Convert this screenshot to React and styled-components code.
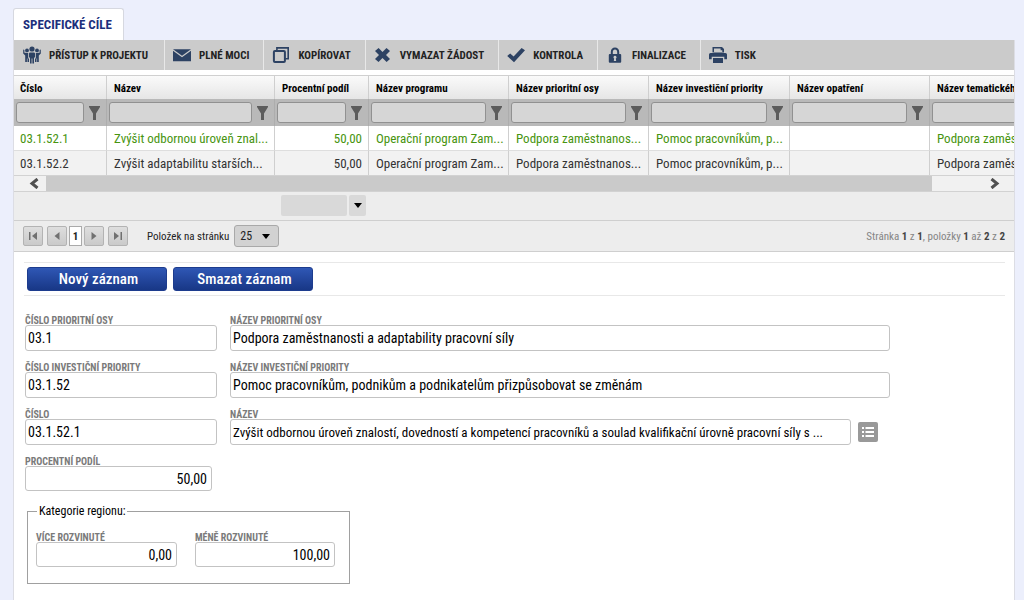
import React, { useState } from "react";
import styled, { createGlobalStyle, css } from "styled-components";

const GlobalStyle = createGlobalStyle`
  * {
    box-sizing: border-box;
  }

  body {
    margin: 0;
    background: #eceffc;
    color: #222;
    font-family: "Roboto Condensed", "Liberation Sans Narrow", Roboto, sans-serif;
    font-size: 13px;
  }

  button,
  input,
  select {
    font-family: inherit;
    margin: 0;
  }
`;

const Page = styled.div`
  display: flex;
  flex-direction: column;
  min-height: 100vh;
  padding: 8px 9px 0 13px;
`;

const Tabs = styled.nav`
  display: flex;
`;

const Tab = styled.a`
  height: 32px;
  padding: 0 11px 0 9px;
  border: 1px solid #d6d8e0;
  border-bottom: 0;
  border-radius: 3px 3px 0 0;
  background: #fff;
  color: #1c2f7c;
  font-size: 13px;
  font-weight: 700;
  line-height: 31px;
  text-decoration: none;
  white-space: nowrap;
`;

const Panel = styled.main`
  flex: 1;
  border: solid #dcdde4;
  border-width: 0 1px;
  background: #fff;
`;

const Toolbar = styled.div`
  display: flex;
  height: 30px;
  margin-bottom: 5px;
  padding-left: 1px;
  background: #cbcbcb;
`;

const ToolButton = styled.button`
  display: flex;
  align-items: center;
  gap: 8px;
  padding: 0 14px 0 8px;
  border: 0;
  border-right: 1px solid #e8e8e8;
  background: none;
  color: #222;
  font-size: 11px;
  font-weight: 700;
  white-space: nowrap;

  &:first-child {
    padding-right: 16px;
  }

  &:last-child {
    border-right: 0;
  }

  svg {
    flex: none;
    width: 18px;
    height: 18px;
    fill: #2d4263;
  }
`;

const GridScroller = styled.div`
  overflow: hidden;
  border-top: 1px solid #d0d0d0;
`;

const Grid = styled.table`
  width: 1056px;
  border-collapse: separate;
  border-spacing: 0;
  table-layout: fixed;
`;

const cellBorder = css`
  border-right: 1px solid #cfcfcf;
`;

const HeadCell = styled.th`
  ${cellBorder}
  height: 23px;
  padding: 1px 0 0 7px;
  background: linear-gradient(#fafafa, #e6e6e6);
  color: #000;
  font-size: 11px;
  font-weight: 700;
  text-align: left;
  white-space: nowrap;

  &:first-child {
    padding-left: 6px;
  }
`;

const FilterCell = styled.td`
  ${cellBorder}
  border-right-color: #adadad;
  height: 27px;
  padding: 0 6px 0 2px;
  background: #b9b9b9;
`;

const Filter = styled.div`
  display: flex;
  align-items: center;
  gap: 5px;
`;

const FilterInput = styled.input`
  flex: 1;
  min-width: 0;
  height: 21px;
  border: 1px solid #919191;
  border-radius: 3px;
  background: #d6d6d6;
  font-size: 11px;
`;

const FilterButton = styled.button`
  display: flex;
  padding: 0;
  border: 0;
  background: none;

  svg {
    width: 11px;
    height: 14px;
    fill: #5c5c5c;
  }
`;

const Row = styled.tr`
  color: ${props => (props.$selected ? "#47940f" : "#333")};
  background: ${props => (props.$selected ? "#fff" : "#f2f2f2")};
`;

const Cell = styled.td`
  ${cellBorder}
  height: ${props => (props.$last ? 24 : 25)}px;
  padding: 0 6px 0 7px;
  border-bottom: ${props => (props.$last ? 0 : 1)}px solid #dedede;
  overflow: hidden;
  font-size: 13px;
  text-align: ${props => (props.$numeric ? "right" : "left")};
  white-space: nowrap;

  &:first-child {
    padding-left: 6px;
  }
`;

const ScrollBar = styled.div`
  display: grid;
  grid-template-columns: 32px 1fr 82px;
  height: 17px;
  border: solid #d2d2d2;
  border-width: 1px 0;
  background: #f1f1f1;
`;

const ScrollThumb = styled.div`
  background: #cacaca;
`;

const ScrollButton = styled.button`
  display: flex;
  align-items: center;
  justify-content: flex-end;
  padding: 0 ${props => props.$inset}px 0 0;
  border: 0;
  background: none;

  svg {
    width: 10px;
    height: 11px;
    fill: none;
    stroke: #505050;
    stroke-width: 3;
  }
`;

const Summary = styled.div`
  display: flex;
  gap: 2px;
  height: 28px;
  padding: 3px 0 0 267px;
  background: #ededed;
`;

const SummaryBox = styled.input`
  width: 66px;
  height: 21px;
  border: 0;
  border-radius: 2px;
  background: #d9d9d9;
`;

const SummaryButton = styled.button`
  display: flex;
  align-items: center;
  justify-content: center;
  width: 17px;
  height: 21px;
  padding: 0;
  border: 0;
  border-radius: 2px;
  background: #d9d9d9;

  svg {
    width: 8px;
    height: 5px;
  }
`;

const Pager = styled.div`
  display: flex;
  align-items: center;
  height: 32px;
  padding: 0 9px;
  border: solid #cfcfcf;
  border-width: 1px 0;
  background: #ededed;
  font-size: 11px;
`;

const PagerButtons = styled.div`
  display: flex;
  align-items: center;
  gap: 4px;
`;

const PageGroup = styled.div`
  display: flex;
  align-items: center;
  gap: 2px;
`;

const PageButton = styled.button`
  display: flex;
  align-items: center;
  justify-content: center;
  width: 20px;
  height: 20px;
  padding: 0;
  border: 1px solid #b3b3b3;
  border-radius: 2px;
  background: linear-gradient(#dedede, #cacaca);

  svg {
    width: 10px;
    height: 8px;
    fill: #707070;
  }
`;

const CurrentPage = styled.a`
  width: 13px;
  height: 20px;
  border: 1px solid #aaa;
  background: #fff;
  color: #222;
  font-size: 11px;
  font-weight: 700;
  line-height: 19px;
  text-align: center;
  text-decoration: none;
`;

const SizeLabel = styled.label`
  margin-left: 19px;
  color: #222;
  white-space: nowrap;
`;

const SizePicker = styled.div`
  display: grid;
  align-items: center;
  margin-left: 5px;

  select,
  svg {
    grid-area: 1 / 1;
  }

  svg {
    justify-self: end;
    width: 8px;
    height: 5px;
    margin-right: 9px;
    pointer-events: none;
  }
`;

const SizeSelect = styled.select`
  width: 45px;
  height: 22px;
  padding: 0 5px;
  border: 1px solid #a9a9a9;
  border-radius: 3px;
  background: #d2d2d2;
  color: #222;
  font-size: 12px;
  appearance: none;
`;

const PageInfo = styled.span`
  margin-left: auto;
  color: #858585;
  white-space: nowrap;

  strong {
    color: #444;
  }
`;

const Detail = styled.form`
  padding: 10px 9px 16px 10px;
`;

const Actions = styled.div`
  display: flex;
  gap: 6px;
  height: 34px;
  padding: 4px 3px 0;
  border: solid #e8e8e8;
  border-width: 1px 0;
`;

const ActionButton = styled.button`
  width: 140px;
  height: 24px;
  padding: 0 0 0 3px;
  border: 1px solid #1d3c8e;
  border-radius: 3px;
  background: linear-gradient(#2f57b5, #183786);
  color: #fff;
  font-size: 15px;
  font-weight: 500;
  white-space: nowrap;
`;

const Fields = styled.div`
  display: grid;
  grid-template-columns: 192px minmax(0, 1fr);
  column-gap: 13px;
  row-gap: 10px;
  padding: 18px 115px 0 1px;
`;

const Field = styled.div`
  display: flex;
  flex-direction: column;
`;

const Label = styled.label`
  height: 11px;
  color: #7a7a7a;
  font-size: 10px;
  font-weight: 700;
  line-height: 13px;
  white-space: nowrap;
`;

const TextInput = styled.input`
  width: ${props => props.$width || "100%"};
  min-width: 0;
  height: ${props => (props.$numeric ? 25 : 26)}px;
  padding: 0 ${props => (props.$numeric ? 4 : 2)}px;
  border: 1px solid #c3c3c3;
  border-radius: 3px;
  background: #fff;
  color: #000;
  font-size: ${props => (props.$long ? 13 : 14)}px;
  text-align: ${props => (props.$numeric ? "right" : "left")};
`;

const LookupRow = styled.div`
  display: flex;
  align-items: center;
  gap: 7px;
  padding-right: 12px;
`;

const LookupButton = styled.button`
  display: flex;
  flex: none;
  align-items: center;
  justify-content: center;
  width: 20px;
  height: 20px;
  padding: 0;
  border: 0;
  border-radius: 2px;
  background: #999;

  svg {
    width: 12px;
    height: 12px;
    fill: #fff;
  }
`;

const Region = styled.fieldset`
  display: grid;
  grid-template-columns: 141px 140px;
  align-items: start;
  gap: 18px;
  width: 323px;
  height: 81px;
  margin: 12px 0 0 3px;
  padding: 12px 8px 0;
  border: 1px solid #a0a0a0;

  legend {
    margin-left: 1px;
    padding: 0 2px;
    color: #000;
    font-size: 12px;
    line-height: 16px;
  }
`;

const icons = {
  people: (
    <svg viewBox="0 0 18 18">
      <circle cx="9" cy="3" r="2.6" />
      <circle cx="4" cy="4.4" r="1.9" />
      <circle cx="14" cy="4.4" r="1.9" />
      <path d="M7.2 6.400h3.600q1.200 0 1.200 1.200v4h-1V17.500H9.400v-5h-.8v5H7v-5.900H6V7.600Q6 6.400 7.200 6.400z" />
      <path d="M.2 3.600l1.200.4v2.800l3.800.2v5.400h.8V16H4.500v-3.400h-.6V16H2.200V9.600L.2 7.600z" />
      <path d="M17.800 3.600l-1.200.4v2.800l-3.800.2v5.400H12V16h1.500v-3.400h.6V16h1.700V9.600l2-2z" />
    </svg>
  ),
  mail: (
    <svg viewBox="0 0 18 18">
      <path d="M0 3.200h18L9 9.800z" />
      <path d="M0 4.800l9 6.500 9-6.500v10.400H0z" />
    </svg>
  ),
  copy: (
    <svg viewBox="0 0 18 18">
      <path d="M4.900 4.500V1.900h11.300v10.800h-2.900" fill="none" stroke="#2d4263" strokeWidth="1.600" />
      <rect x="1.900" y="5" width="11" height="11" rx="1" fill="none" stroke="#2d4263" strokeWidth="2" />
    </svg>
  ),
  cross: (
    <svg viewBox="0 0 18 18">
      <path d="M4.600 2L8.500 6l4-4L16 5l-4 4 4 4-3.400 3-4.100-4-4 4L1 13l4-4-4-4z" />
    </svg>
  ),
  check: (
    <svg viewBox="0 0 18 18">
      <path d="M.2 10l3-2.600 3.400 3.200L14.600 2 18 4.200 7 16.200z" />
    </svg>
  ),
  lock: (
    <svg viewBox="0 0 18 18">
      <path
        fillRule="evenodd"
        d="M4.800 8V6C4.800 3.400 6.600 1.600 9 1.600S13.200 3.400 13.200 6v2h1q1 0 1 1v6.800q0 1-1 1H3.800q-1 0-1-1V9q0-1 1-1zM6.800 8h4.400V6c0-1.500-.9-2.500-2.200-2.500S6.800 4.500 6.800 6zM9 9.800a1.500 1.500 0 0 0-.8 2.800L7.800 15h2.400l-.4-2.400A1.500 1.500 0 0 0 9 9.800z"
      />
    </svg>
  ),
  print: (
    <svg viewBox="0 0 18 18">
      <path fillRule="evenodd" d="M3.500 1h9.500l2 2v3.500h-11.500zM5 2.500V6h8.300V4.200h-1.700V2.500z" />
      <path d="M1.500 7h15Q18 7 18 8.500v4.800h-2.700v-2.600H2.700v2.600H0V8.500Q0 7 1.500 7z" />
      <path d="M4 12h10v5H4z" />
    </svg>
  )
};

const tools = [
  { icon: "people", label: "PŘÍSTUP K PROJEKTU" },
  { icon: "mail", label: "PLNÉ MOCI" },
  { icon: "copy", label: "KOPÍROVAT" },
  { icon: "cross", label: "VYMAZAT ŽÁDOST" },
  { icon: "check", label: "KONTROLA" },
  { icon: "lock", label: "FINALIZACE" },
  { icon: "print", label: "TISK" }
];

const columns = [
  { title: "Číslo", width: 93 },
  { title: "Název", width: 168 },
  { title: "Procentní podíl", width: 94, numeric: true },
  { title: "Název programu", width: 140 },
  { title: "Název prioritní osy", width: 140 },
  { title: "Název investiční priority", width: 141 },
  { title: "Název opatření", width: 140 },
  { title: "Název tematického cíle", width: 140 }
];

const rows = [
  [
    "03.1.52.1",
    "Zvýšit odbornou úroveň znal...",
    "50,00",
    "Operační program Zam...",
    "Podpora zaměstnanos...",
    "Pomoc pracovníkům, p...",
    "",
    "Podpora zaměstnanos..."
  ],
  [
    "03.1.52.2",
    "Zvýšit adaptabilitu starších...",
    "50,00",
    "Operační program Zam...",
    "Podpora zaměstnanos...",
    "Pomoc pracovníkům, p...",
    "",
    "Podpora zaměstnanos..."
  ]
];

const ArrowDown = () => (
  <svg viewBox="0 0 8 5">
    <path d="M0 0h8L4 5z" />
  </svg>
);

const TextField = ({ id, label, value, width, numeric }) => (
  <Field>
    <Label htmlFor={id}>{label}</Label>
    <TextInput id={id} defaultValue={value} $width={width} $numeric={numeric} />
  </Field>
);

const GoalsGrid = () => {
  const [selected, setSelected] = useState(0);

  return (
    <GridScroller>
      <Grid>
        <colgroup>
          {columns.map(column => (
            <col key={column.title} style={{ width: column.width }} />
          ))}
        </colgroup>
        <thead>
          <tr>
            {columns.map(column => (
              <HeadCell key={column.title}>{column.title}</HeadCell>
            ))}
          </tr>
          <tr>
            {columns.map(column => (
              <FilterCell key={column.title}>
                <Filter>
                  <FilterInput aria-label={column.title} />
                  <FilterButton type="button" aria-label={`Filtr ${column.title}`}>
                    <svg viewBox="0 0 11 14">
                      <path d="M0 0h11v1L7 7.500V14H4V7.500L0 1z" />
                    </svg>
                  </FilterButton>
                </Filter>
              </FilterCell>
            ))}
          </tr>
        </thead>
        <tbody>
          {rows.map((row, r) => (
            <Row key={row[0]} $selected={r === selected} onClick={() => setSelected(r)}>
              {row.map((text, c) => (
                <Cell
                  key={columns[c].title}
                  $numeric={columns[c].numeric}
                  $last={r === rows.length - 1}
                >
                  {text}
                </Cell>
              ))}
            </Row>
          ))}
        </tbody>
      </Grid>
    </GridScroller>
  );
};

const GridPager = () => (
  <Pager>
    <PagerButtons>
      <PageButton type="button" aria-label="První">
        <svg viewBox="0 0 10 8">
          <path d="M1 0h1.500v8H1zM9 0v8L4 4z" />
        </svg>
      </PageButton>
      <PageGroup>
        <PageButton type="button" aria-label="Předchozí">
          <svg viewBox="0 0 10 8">
            <path d="M7.500 0v8l-5-4z" />
          </svg>
        </PageButton>
        <CurrentPage href="#1">1</CurrentPage>
        <PageButton type="button" aria-label="Další">
          <svg viewBox="0 0 10 8">
            <path d="M2.500 0v8l5-4z" />
          </svg>
        </PageButton>
      </PageGroup>
      <PageButton type="button" aria-label="Poslední">
        <svg viewBox="0 0 10 8">
          <path d="M7.500 0H9v8H7.500zM1 0v8l5-4z" />
        </svg>
      </PageButton>
    </PagerButtons>
    <SizeLabel htmlFor="page-size">Položek na stránku</SizeLabel>
    <SizePicker>
      <SizeSelect id="page-size" defaultValue="25">
        <option>25</option>
        <option>50</option>
      </SizeSelect>
      <ArrowDown />
    </SizePicker>
    <PageInfo>
      Stránka <strong>1</strong> z <strong>1</strong>, položky <strong>1</strong> až{" "}
      <strong>2</strong> z <strong>2</strong>
    </PageInfo>
  </Pager>
);

const App = () => (
  <>
    <GlobalStyle />
    <Page>
      <Tabs>
        <Tab href="#cile">SPECIFICKÉ CÍLE</Tab>
      </Tabs>
      <Panel>
        <Toolbar>
          {tools.map(tool => (
            <ToolButton key={tool.label} type="button">
              {icons[tool.icon]}
              {tool.label}
            </ToolButton>
          ))}
        </Toolbar>
        <GoalsGrid />
        <ScrollBar>
          <ScrollButton type="button" aria-label="Doleva" $inset={7}>
            <svg viewBox="0 0 10 11">
              <path d="M8.500 1L3 5.500 8.500 10" />
            </svg>
          </ScrollButton>
          <ScrollThumb />
          <ScrollButton type="button" aria-label="Doprava" $inset={14}>
            <svg viewBox="0 0 10 11">
              <path d="M1.500 1L7 5.500 1.500 10" />
            </svg>
          </ScrollButton>
        </ScrollBar>
        <Summary>
          <SummaryBox aria-label="Souhrn" />
          <SummaryButton type="button" aria-label="Funkce souhrnu">
            <ArrowDown />
          </SummaryButton>
        </Summary>
        <GridPager />
        <Detail>
          <Actions>
            <ActionButton type="button">Nový záznam</ActionButton>
            <ActionButton type="button">Smazat záznam</ActionButton>
          </Actions>
          <Fields>
            <TextField id="axis-no" label="ČÍSLO PRIORITNÍ OSY" value="03.1" />
            <TextField
              id="axis-name"
              label="NÁZEV PRIORITNÍ OSY"
              value="Podpora zaměstnanosti a adaptability pracovní síly"
            />
            <TextField id="priority-no" label="ČÍSLO INVESTIČNÍ PRIORITY" value="03.1.52" />
            <TextField
              id="priority-name"
              label="NÁZEV INVESTIČNÍ PRIORITY"
              value="Pomoc pracovníkům, podnikům a podnikatelům přizpůsobovat se změnám"
            />
            <TextField id="goal-no" label="ČÍSLO" value="03.1.52.1" />
            <Field>
              <Label htmlFor="goal-name">NÁZEV</Label>
              <LookupRow>
                <TextInput
                  id="goal-name"
                  $long
                  defaultValue="Zvýšit odbornou úroveň znalostí, dovedností a kompetencí pracovníků a soulad kvalifikační úrovně pracovní síly s ..."
                />
                <LookupButton type="button" aria-label="Vybrat ze seznamu">
                  <svg viewBox="0 0 12 12">
                    <path d="M0 1h2v2H0zM3.500 1H12v2H3.500zM0 5h2v2H0zM3.500 5H12v2H3.500zM0 9h2v2H0zM3.500 9H12v2H3.500z" />
                  </svg>
                </LookupButton>
              </LookupRow>
            </Field>
            <TextField id="share" label="PROCENTNÍ PODÍL" value="50,00" width="187px" numeric />
          </Fields>
          <Region>
            <legend>Kategorie regionu:</legend>
            <TextField id="more-developed" label="VÍCE ROZVINUTÉ" value="0,00" numeric />
            <TextField id="less-developed" label="MÉNĚ ROZVINUTÉ" value="100,00" numeric />
          </Region>
        </Detail>
      </Panel>
    </Page>
  </>
);

export default App;
